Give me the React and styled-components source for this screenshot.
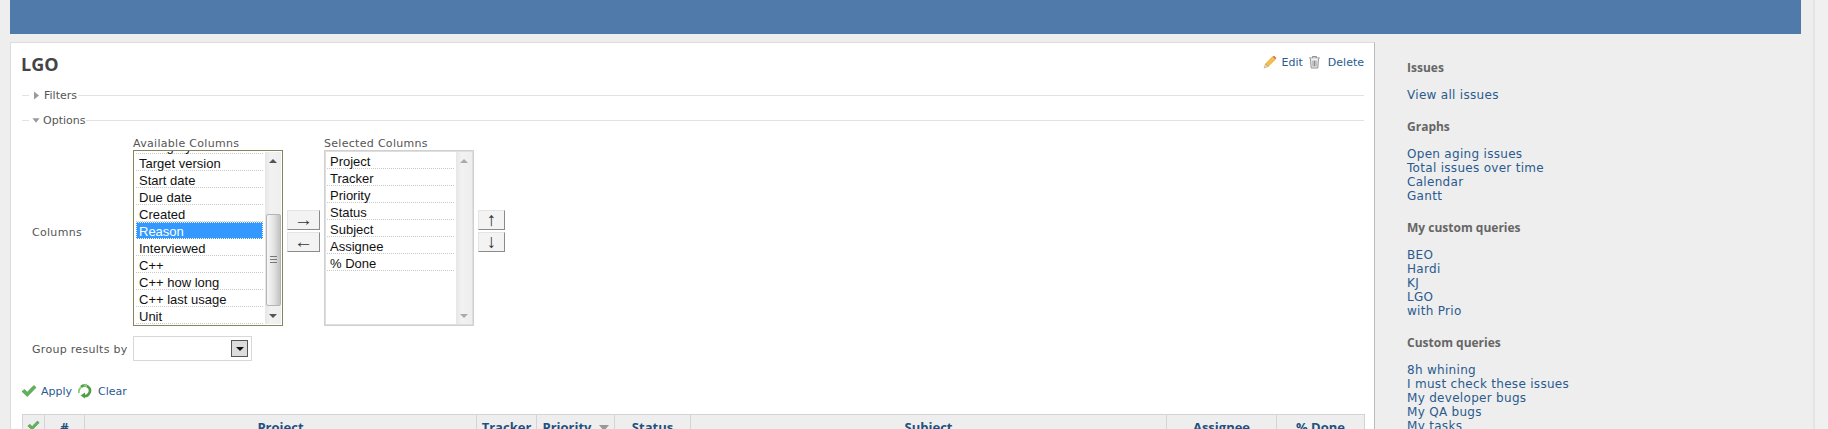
import React from "react";
import styled, { createGlobalStyle } from "styled-components";

const GlobalStyle = createGlobalStyle`
  html, body {
    margin: 0;
    padding: 0;
    height: 429px;
    overflow: hidden;
    background: #f0f0f0;
  }
  body {
    font-family: "DejaVu Sans", Verdana, sans-serif;
    font-size: 11px;
    color: #555;
  }
`;

const Page = styled.div`
  width: 1803px;
  height: 429px;
  padding-left: 10px;
  background: #eeeeee;
  border-right: 2px solid #e4e4e4;
  overflow: hidden;
`;

const TopBar = styled.div`
  width: 1791px;
  height: 34px;
  background: #507aaa;
`;

const Columns = styled.div`
  display: flex;
  margin-top: 8px;
`;

const Main = styled.div`
  box-sizing: border-box;
  width: 1365px;
  height: 400px;
  padding: 0 10px 0 11px;
  background: #fff;
  border: 1px solid #dcdcdc;
  border-right: 1px solid #bbb;
  border-bottom: 0;
`;

const TitleRow = styled.div`
  display: flex;
  justify-content: space-between;
  height: 42px;
`;

const Title = styled.h2`
  margin: 8px 0 0 -1px;
  font-family: "Open Sans", sans-serif;
  font-size: 18px;
  line-height: 26px;
  font-weight: 700;
  color: #444;
`;

const Actions = styled.div`
  display: flex;
  align-items: center;
  height: 14px;
  margin-top: 12px;
`;

const ActionLink = styled.a`
  display: inline-flex;
  align-items: center;
  gap: ${(p) => p.$gap || 5}px;
  margin-left: ${(p) => p.$left || 0}px;
  color: #2a5a8f;
`;

const Legend = styled.div`
  display: flex;
  align-items: center;
  height: 14px;
  margin-top: ${(p) => p.$top}px;
  color: #555;
`;

const Dash = styled.span`
  width: 7px;
  height: 1px;
  margin-right: ${(p) => p.$right}px;
  background: #e2e2e2;
`;

const Rule = styled.span`
  flex: 1;
  height: 1px;
  background: #e2e2e2;
`;

const LegendText = styled.span`
  margin: 0 1px 0 ${(p) => p.$left}px;
`;

const FormRow = styled.div`
  display: grid;
  grid-template-columns: 111px auto;
  align-items: center;
  justify-content: start;
  margin-top: ${(p) => p.$top}px;
`;

const FormLabel = styled.label`
  padding: ${(p) => p.$top || 1}px 0 0 10px;
  letter-spacing: 0.3px;
  color: #555;
`;

const Selector = styled.div`
  display: flex;
  align-items: center;
`;

const ListColumn = styled.div`
  display: flex;
  flex-direction: column;
`;

const ListHeading = styled.div`
  height: 14px;
  line-height: 16px;
  letter-spacing: 0.3px;
  color: #555;
`;

const ListBox = styled.div`
  box-sizing: border-box;
  display: flex;
  width: ${(p) => p.$width}px;
  height: 176px;
  border: 1px solid ${(p) => (p.$focused ? "#85855f" : "#d0d0d0")};
  outline: 1px solid ${(p) => (p.$focused ? "transparent" : "#dedede")};
  outline-offset: -2px;
  overflow: hidden;
`;

const Options = styled.div`
  flex: 1;
  padding: 0 2px 0 2px;
  font-family: "Liberation Sans", Arial, sans-serif;
  font-size: 13px;
  color: #111;
`;

const Option = styled.div`
  box-sizing: border-box;
  height: 17px;
  line-height: 19px;
  padding-left: 3px;
  white-space: nowrap;
  border-bottom: 1px dotted #c8c8c8;
  ${(p) =>
    p.$selected &&
    `
    background: #3399ff;
    color: #fff;
    outline: 1px dotted #fff;
    outline-offset: -1px;
    border-bottom-color: transparent;
  `}
`;

const Scroller = styled.div`
  position: relative;
  flex: none;
  width: 16px;
  margin: 1px 1px 1px 0;
  background: linear-gradient(90deg, #e6e6e6, #f2f2f2 35%, #eeeeee);
`;

const Thumb = styled.div`
  position: absolute;
  left: 1px;
  right: 0;
  top: 62px;
  height: 92px;
  box-sizing: border-box;
  border: 1px solid #b5b5b5;
  border-radius: 2px;
  background: linear-gradient(90deg, #f6f6f6, #e2e2e2 55%, #c2c2c2);
  display: flex;
  align-items: center;
  justify-content: center;
`;

const Grip = styled.span`
  width: 7px;
  height: 8px;
  background: repeating-linear-gradient(180deg, #777 0 1px, transparent 1px 3px);
`;

const ScrollArrow = styled.span`
  position: absolute;
  left: 4px;
  ${(p) => (p.$down ? "bottom: 6px;" : "top: 7px;")}
  width: 0;
  height: 0;
  border-left: 4px solid transparent;
  border-right: 4px solid transparent;
  ${(p) =>
    p.$down
      ? `border-top: 4px solid ${p.$pale ? "#aaa" : "#555"};`
      : `border-bottom: 4px solid ${p.$pale ? "#aaa" : "#555"};`}
`;

const MoveButtons = styled.div`
  display: flex;
  flex-direction: column;
  gap: 2px;
  margin: 0 ${(p) => p.$right}px 0 ${(p) => p.$left}px;
`;

const MoveButton = styled.button`
  box-sizing: border-box;
  width: ${(p) => p.$width}px;
  height: 20px;
  padding: 0;
  display: flex;
  align-items: center;
  justify-content: center;
  background: #f3f3f3;
  border: 1px solid #e4e4e4;
  border-right-color: #8a8a8a;
  border-bottom-color: #8a8a8a;
  font-family: "Liberation Sans", Arial, sans-serif;
  font-size: 19px;
  line-height: 18px;
  color: #333;
`;

const GroupSelect = styled.div`
  box-sizing: border-box;
  display: flex;
  justify-content: flex-end;
  align-items: center;
  width: 119px;
  height: 25px;
  padding-right: 3px;
  border: 1px solid #d8d8d8;
`;

const DropButton = styled.span`
  box-sizing: border-box;
  display: flex;
  align-items: center;
  justify-content: center;
  width: 17px;
  height: 17px;
  background: #dcdcdc;
  border: 1px solid #555;
`;

const Caret = styled.span`
  width: 0;
  height: 0;
  border-left: 4px solid transparent;
  border-right: 4px solid transparent;
  border-top: 4px solid #111;
`;

const Buttons = styled.div`
  display: flex;
  align-items: center;
  height: 16px;
  margin: 22px 0 0 -1px;
`;

const Table = styled.table`
  width: 1342px;
  margin-top: 15px;
  table-layout: fixed;
  border-collapse: collapse;
`;

const Head = styled.th`
  box-sizing: border-box;
  width: ${(p) => p.$width}px;
  height: 24px;
  padding: 0;
  background: #eeeeee;
  border: 1px solid #d4d4d4;
  border-bottom: 0;
  font-family: "Open Sans", sans-serif;
  font-size: 13px;
  font-weight: 700;
  color: #22507f;
  white-space: nowrap;
`;

const SortMark = styled.span`
  display: inline-block;
  width: 0;
  height: 0;
  margin-left: 7px;
  vertical-align: 1px;
  border-left: 5px solid transparent;
  border-right: 5px solid transparent;
  border-top: 6px solid #999;
`;

const Sidebar = styled.aside`
  padding: 19px 0 0 32px;
`;

const SideHeading = styled.h3`
  margin: 0 0 13px;
  font-family: "Open Sans", sans-serif;
  font-size: 12px;
  line-height: 14px;
  font-weight: 700;
  color: #666;
`;

const SideLinks = styled.div`
  display: flex;
  flex-direction: column;
  margin-bottom: 18px;
  font-size: 12px;
  line-height: 14px;
  letter-spacing: 0.3px;
  color: #2a5a8f;
`;

const TriRight = () => (
  <svg width="7" height="9" viewBox="0 0 7 9">
    <path d="M1 0.5 L6 4.5 L1 8.5 Z" fill="#9a9a9a" />
  </svg>
);

const TriDown = () => (
  <svg width="8" height="7" viewBox="0 0 9 7">
    <path d="M0.5 1 L8.5 1 L4.5 6 Z" fill="#9a9a9a" />
  </svg>
);

const Pencil = () => (
  <svg width="14" height="14" viewBox="0 0 14 14">
    <path d="M10 1.5 L12.5 4 L5 11.5 L2.5 9 Z" fill="#f6c244" stroke="#d98e1c" strokeWidth="0.7" />
    <path d="M10 1.5 L11 0.7 L13.3 3 L12.5 4 Z" fill="#e2553f" />
    <path d="M2.5 9 L5 11.5 L1 13 Z" fill="#f3dfb5" stroke="#a88a55" strokeWidth="0.5" />
  </svg>
);

const Trash = () => (
  <svg width="13" height="14" viewBox="0 0 13 14" fill="none" stroke="#8f8f96">
    <path d="M1 3 H12 M4.5 3 V1.5 H8.5 V3" />
    <path d="M2.5 3.5 L3.2 13 H9.8 L10.5 3.5" fill="#f2f2f2" />
    <path d="M5 5.5 V11.5 M6.5 5.5 V11.5 M8 5.5 V11.5" />
  </svg>
);

const Check = ({ size = 16 }) => (
  <svg width={size} height={size} viewBox="0 0 16 16">
    <path d="M1 8.5 L3.5 6.5 L6.3 9.2 L12.8 2.5 L15 4.5 L6.3 13.5 Z" fill="#5fb35a" stroke="#3d8f3c" strokeWidth="0.6" />
  </svg>
);

const Reload = () => (
  <svg width="14" height="16" viewBox="0 0 14 16" fill="none">
    <path d="M3 4 A5.2 5.2 0 1 1 5 12.6" stroke="#4f9e46" strokeWidth="2.6" />
    <path d="M1 10 A5 5 0 0 1 3 4.5" stroke="#8ccb7b" strokeWidth="2" />
    <path d="M7 9.6 L7 15.4 L2.6 12.6 Z" fill="#4f9e46" />
    <path d="M5 2 L9 0.6 L9 5 Z" fill="#8ccb7b" />
  </svg>
);

const available = ["Category", "Target version", "Start date", "Due date", "Created", "Reason", "Interviewed", "C++", "C++ how long", "C++ last usage", "Unit"];
const selected = ["Project", "Tracker", "Priority", "Status", "Subject", "Assignee", "% Done"];

const columns = [
  { label: <Check size={13} />, width: 22 },
  { label: "#", width: 40 },
  { label: "Project", width: 392 },
  { label: "Tracker", width: 60 },
  { label: "Priority", width: 78, sorted: true },
  { label: "Status", width: 76 },
  { label: "Subject", width: 476 },
  { label: "Assignee", width: 110 },
  { label: "% Done", width: 88 },
];

const sideGroups = [
  { title: "Issues", links: ["View all issues"] },
  { title: "Graphs", links: ["Open aging issues", "Total issues over time", "Calendar", "Gantt"] },
  { title: "My custom queries", links: ["BEO", "Hardi", "KJ", "LGO", "with Prio"] },
  { title: "Custom queries", links: ["8h whining", "I must check these issues", "My developer bugs", "My QA bugs", "My tasks"] },
];

export default function App() {
  return (
    <>
      <GlobalStyle />
      <Page>
        <TopBar />
        <Columns>
          <Main>
            <TitleRow>
              <Title>LGO</Title>
              <Actions>
                <ActionLink><Pencil />Edit</ActionLink>
                <ActionLink $left={5} $gap={7}><Trash />Delete</ActionLink>
              </Actions>
            </TitleRow>
            <Legend $top={3}>
              <Dash $right={4} /><TriRight /><LegendText $left={4}>Filters</LegendText><Rule />
            </Legend>
            <Legend $top={11}>
              <Dash $right={3} /><TriDown /><LegendText $left={3}>Options</LegendText><Rule />
            </Legend>
            <FormRow $top={9}>
              <FormLabel $top={3}>Columns</FormLabel>
              <Selector>
                <ListColumn>
                  <ListHeading>Available Columns</ListHeading>
                  <ListBox $width={150} $focused>
                    <Options>
                      {available.map((name, i) => (
                        <Option
                          key={name}
                          $selected={name === "Reason"}
                          style={i === 0 ? { marginTop: "-14px" } : undefined}
                        >
                          {name}
                        </Option>
                      ))}
                    </Options>
                    <Scroller>
                      <ScrollArrow />
                      <Thumb><Grip /></Thumb>
                      <ScrollArrow $down />
                    </Scroller>
                  </ListBox>
                </ListColumn>
                <MoveButtons $left={4} $right={4}>
                  <MoveButton $width={33}>→</MoveButton>
                  <MoveButton $width={33}>←</MoveButton>
                </MoveButtons>
                <ListColumn>
                  <ListHeading>Selected Columns</ListHeading>
                  <ListBox $width={150}>
                    <Options>
                      {selected.map((name, i) => (
                        <Option key={name} style={i === 0 ? { marginTop: "1px" } : undefined}>
                          {name}
                        </Option>
                      ))}
                    </Options>
                    <Scroller>
                      <ScrollArrow $pale />
                      <ScrollArrow $down $pale />
                    </Scroller>
                  </ListBox>
                </ListColumn>
                <MoveButtons $left={4} $right={0}>
                  <MoveButton $width={27}>↑</MoveButton>
                  <MoveButton $width={27}>↓</MoveButton>
                </MoveButtons>
              </Selector>
            </FormRow>
            <FormRow $top={10}>
              <FormLabel>Group results by</FormLabel>
              <GroupSelect>
                <DropButton><Caret /></DropButton>
              </GroupSelect>
            </FormRow>
            <Buttons>
              <ActionLink $gap={4}><Check />Apply</ActionLink>
              <ActionLink $left={6} $gap={6}><Reload />Clear</ActionLink>
            </Buttons>
            <Table>
              <thead>
                <tr>
                  {columns.map((col, i) => (
                    <Head key={i} $width={col.width}>
                      {col.label}
                      {col.sorted && <SortMark />}
                    </Head>
                  ))}
                </tr>
              </thead>
            </Table>
          </Main>
          <Sidebar>
            {sideGroups.map((group) => (
              <div key={group.title}>
                <SideHeading>{group.title}</SideHeading>
                <SideLinks>
                  {group.links.map((link) => (
                    <a key={link}>{link}</a>
                  ))}
                </SideLinks>
              </div>
            ))}
          </Sidebar>
        </Columns>
      </Page>
    </>
  );
}
